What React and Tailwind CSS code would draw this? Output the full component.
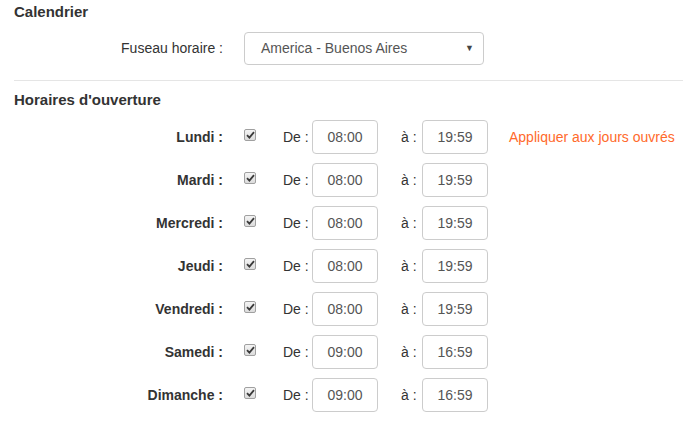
const days = [
  { name: "Lundi", from: "08:00", to: "19:59", apply: true },
  { name: "Mardi", from: "08:00", to: "19:59" },
  { name: "Mercredi", from: "08:00", to: "19:59" },
  { name: "Jeudi", from: "08:00", to: "19:59" },
  { name: "Vendredi", from: "08:00", to: "19:59" },
  { name: "Samedi", from: "09:00", to: "16:59" },
  { name: "Dimanche", from: "09:00", to: "16:59" },
];

const CheckBox = () => (
  <span className="flex h-[12px] w-[12px] items-center justify-center rounded-[2px] border border-[#a0a0a0] bg-gradient-to-b from-[#f4f4f4] to-[#dcdcdc]">
    <svg width="9" height="8" viewBox="0 0 9 8">
      <path d="M1 4.2 L3.4 6.6 L8 1.2" fill="none" stroke="#3a3a3a" strokeWidth="1.8" />
    </svg>
  </span>
);

const TimeInput = ({ value }) => (
  <div className="flex h-[34px] w-[66px] items-center justify-center rounded-[4px] border border-[#cccccc] bg-white text-[#555]">
    {value}
  </div>
);

const App = () => {
  return (
    <div
      className="min-h-[422px] w-[683px] bg-white text-[14px] text-[#333]"
      style={{ fontFamily: '"Liberation Sans", Arial, sans-serif' }}
    >
      <h2 className="pl-[14px] pt-[2px] text-[15px] font-bold leading-[20px]">Calendrier</h2>

      <div className="mt-[10px] flex items-center">
        <div className="w-[224px] pr-[1px] text-right">Fuseau horaire :</div>
        <div className="ml-[20px] flex h-[33px] w-[240px] items-center justify-between rounded-[4px] border border-[#cccccc] bg-white pl-[16px] pr-[9px] text-[#555]">
          <span>America - Buenos Aires</span>
          <span className="text-[9px] text-[#444]">▼</span>
        </div>
      </div>

      <div className="ml-[14px] mt-[15px] border-t border-[#e5e5e5]" />

      <h2 className="mt-[9px] pl-[14px] text-[15px] font-bold leading-[20px]">Horaires d'ouverture</h2>

      <div className="mt-[10px] flex flex-col gap-[9px]">
        {days.map((d) => (
          <div key={d.name} className="flex h-[34px] items-center">
            <div className="w-[224px] pr-[1px] text-right font-bold">{d.name} :</div>
            <div className="ml-[20px] w-[39px] self-start pt-[9px]">
              <CheckBox />
            </div>
            <div className="w-[29px]">De :</div>
            <TimeInput value={d.from} />
            <div className="ml-[23px] w-[21px]">à :</div>
            <TimeInput value={d.to} />
            {d.apply && (
              <div className="ml-[21px] text-[#ff6a2b]">Appliquer aux jours ouvrés</div>
            )}
          </div>
        ))}
      </div>
    </div>
  );
};

export default App;
